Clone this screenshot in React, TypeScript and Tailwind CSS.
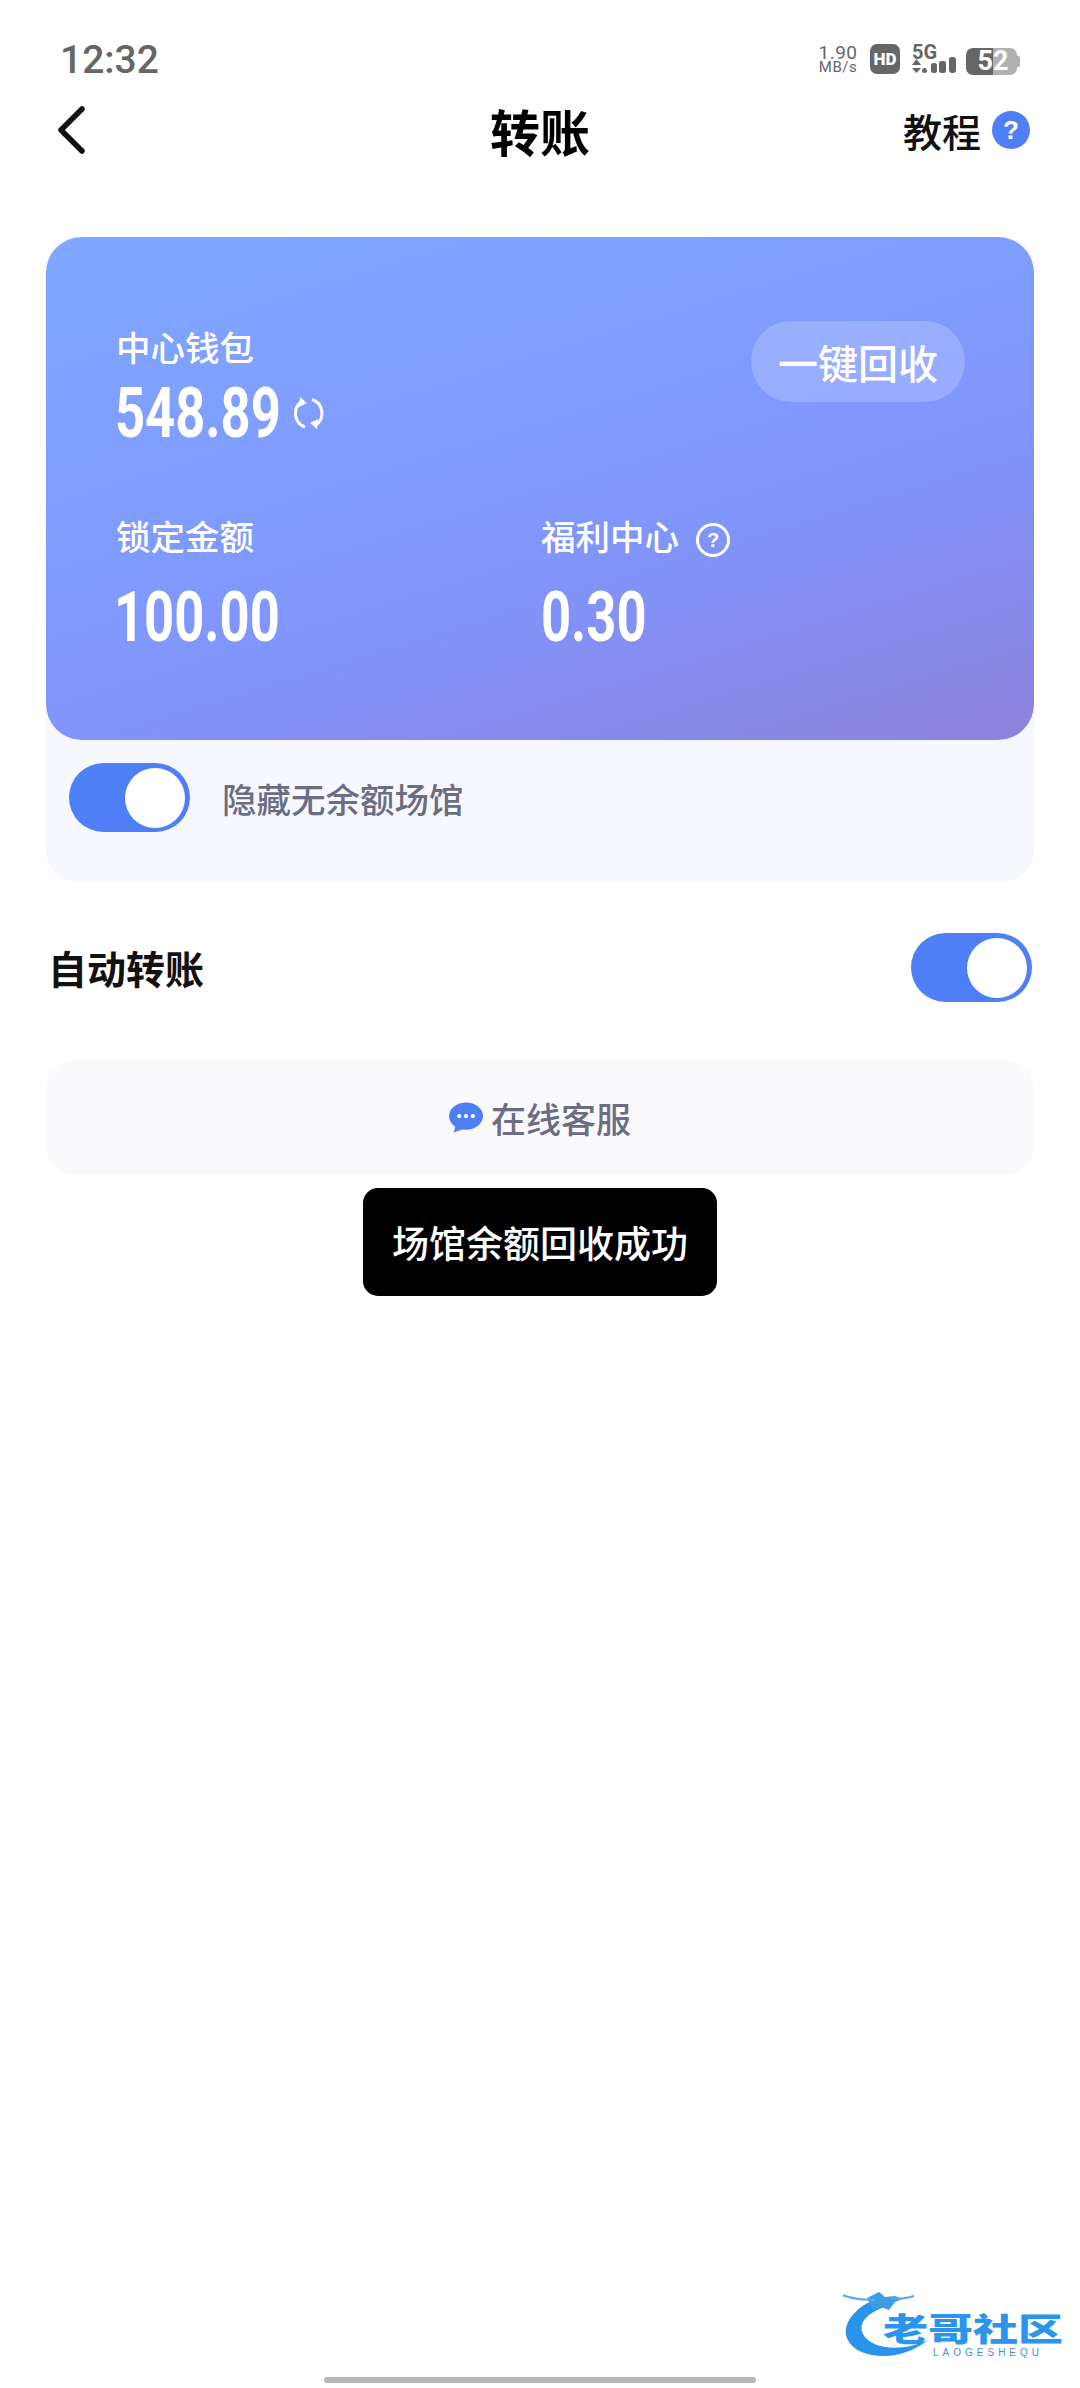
import React from "react";

const cjk = "font-['Noto_Sans_CJK_SC','Noto_Sans',sans-serif]";

// Roboto squeezed to the reference's narrow DIN-like digits; the width is held by the outer box
function Amount({ value, width }: { value: string; width: string }) {
  return (
    <div className={`${width} h-[60px] shrink-0`}>
      <span className="inline-block origin-left scale-x-[0.75] whitespace-nowrap font-['Roboto',sans-serif] text-[70px] font-bold leading-[60px] text-white">
        {value}
      </span>
    </div>
  );
}

function Toggle() {
  return (
    <div className="flex h-[69px] w-[121px] shrink-0 items-center justify-end rounded-full bg-[#4f7ff6] pr-[5px]">
      <div className="h-[60px] w-[60px] rounded-full bg-white" />
    </div>
  );
}

function StatusIcons() {
  return (
    <div className="flex items-start">
      <div className="flex w-[42px] flex-col items-center font-['Roboto',sans-serif] text-[#666]">
        <span className="text-[19px] leading-[17px] tracking-[0.5px]">1.90</span>
        <span className="whitespace-nowrap text-[15px] leading-[13px] tracking-[0.5px]">MB/s</span>
      </div>
      <div className="ml-[11px] flex h-[30px] w-[30px] items-center justify-center rounded-[7px] bg-[#666] font-['Roboto',sans-serif] text-[17px] font-black leading-none text-white">
        HD
      </div>
      <div className="relative ml-[12px] h-[30px] w-[44px]">
        <span className="absolute left-0 top-[2px] font-['Roboto',sans-serif] text-[20px] font-bold leading-[13px] text-[#666]">5G</span>
        <svg className="absolute left-0 top-[8px]" width="44" height="22" viewBox="0 0 44 22" fill="#666">
          <path d="M4.500 7L9 13H0zM0 16h9l-4.500 5z" />
          <rect x="10" y="16" width="5" height="5" rx="2.500" />
          <rect x="19" y="11" width="6" height="10" rx="2.500" />
          <rect x="27" y="9" width="7" height="12" rx="2.500" />
          <rect x="37" y="5" width="7" height="16" rx="3" />
        </svg>
      </div>
      <div className="ml-[10px] mt-[4px] flex h-[27px] items-center">
        <div className="flex h-[27px] w-[27px] items-center justify-end rounded-l-[7px] bg-[#666]">
          <span className="font-['Roboto',sans-serif] text-[27px] font-bold leading-[27px] text-white">5</span>
        </div>
        <div className="h-[27px] w-[24px] rounded-r-[7px] bg-[#b0b0b0] font-['Roboto',sans-serif] text-[27px] font-bold leading-[27px] text-white">
          2
        </div>
        <div className="h-[11px] w-[3px] rounded-r-[2px] bg-[#b0b0b0]" />
      </div>
    </div>
  );
}

function RefreshIcon() {
  return (
    <svg width="33" height="34" viewBox="0 0 33 34" fill="none" stroke="white" strokeWidth="3">
      <path d="M9 6A14.500 14.500 0 0 0 13 31" />
      <path d="M24 29A14.500 14.500 0 0 0 20 3.500" />
      <path d="M8 1l7 6-8 4z" fill="white" stroke="none" />
      <path d="M25 33l-7-6 8-4z" fill="white" stroke="none" />
    </svg>
  );
}

function ChatIcon() {
  return (
    <svg width="34" height="32" viewBox="0 0 35 32" fill="#4e7ff5">
      <ellipse cx="17.500" cy="14" rx="17.500" ry="14" />
      <path d="M7 22L5 31l13-5z" />
      <circle cx="10.500" cy="14" r="2.200" fill="white" />
      <circle cx="17.500" cy="14" r="2.200" fill="white" />
      <circle cx="24.500" cy="14" r="2.200" fill="white" />
    </svg>
  );
}

function Watermark() {
  return (
    <div className="absolute left-[843px] top-[2290px] h-[72px] w-[225px]">
      <svg className="absolute left-0 top-0" width="100" height="72" viewBox="0 0 100 72">
        <path d="M37 8C10 16-4 38 6 52 16 68 55 74 85 50 60 62 28 60 20 44 14 32 26 22 44 16Z" fill="#2a93ec" />
        <path d="M24 8l12-6 6 5 10-1 8 3-8 3-6 8-8-3-8 3z" fill="#3f9be8" />
        <path d="M-1 5C10 9 20 10 32 10M48 8C56 10 62 9 71 6" fill="none" stroke="#5aa9ee" strokeWidth="2" />
      </svg>
      <div className={`absolute left-[40px] top-[26px] origin-top scale-y-[0.72] whitespace-nowrap ${cjk} text-[45px] font-black leading-[31px] text-[#2b94ee]`}>
        老哥社区
      </div>
      <div className="absolute left-[90px] top-[58px] whitespace-nowrap font-['Liberation_Sans',sans-serif] text-[10px] leading-[10px] tracking-[4px] text-[#4a8fd8]">
        LAOGESHEQU
      </div>
    </div>
  );
}

export default function App() {
  return (
    <div className={`relative h-[2388px] w-[1080px] overflow-hidden bg-white ${cjk}`}>
      <div className="flex h-[105px] justify-between pl-[60px] pr-[60px] pt-[44px]">
        <span className="font-['Roboto',sans-serif] text-[39px] font-medium leading-[32px] text-[#666]">12:32</span>
        <StatusIcons />
      </div>

      <div className="relative flex h-[50px] items-center justify-center">
        <svg className="absolute left-[55px] top-[0px]" width="32" height="50" viewBox="0 0 32 50" fill="none" stroke="#111" strokeWidth="5.500" strokeLinecap="round" strokeLinejoin="round">
          <path d="M27 4L6 25l21 21" />
        </svg>
        <h1 className="text-[50px] font-bold leading-[50px] text-black">转账</h1>
        <div className="absolute right-[50px] top-[3px] flex items-center gap-[11px]">
          <span className="text-[39px] font-medium leading-[44px] text-[#111]">教程</span>
          <div className="flex h-[38px] w-[38px] items-center justify-center rounded-full bg-[#4e7ff5] font-['Liberation_Sans',sans-serif] text-[26px] font-bold leading-none text-white">
            ?
          </div>
        </div>
      </div>

      <div className="mx-[46px] mt-[82px] h-[644px] rounded-[30px] bg-[#f7f8fe]">
        <div className="h-[503px] rounded-[36px] bg-[linear-gradient(163deg,#7fa8ff_0%,#8096fd_58%,#8c82dc_100%)] pl-[70px] pr-[69px] pt-[84px]">
          <div className="flex justify-between">
            <div>
              <div className="text-[34.500px] font-medium leading-[50px] text-white">中心钱包</div>
              <div className="-ml-[1px] mt-[12px] flex items-center">
                <Amount value="548.89" width="w-[164px]" />
                <div className="ml-[13px]">
                  <RefreshIcon />
                </div>
              </div>
            </div>
            <button className="flex h-[81px] w-[214px] items-center justify-center rounded-full bg-white/20 text-[40px] font-medium text-white">
              一键回收
            </button>
          </div>
          <div className="mt-[67px] flex">
            <div className="w-[425px]">
              <div className="text-[34.500px] font-medium leading-[50px] text-white">锁定金额</div>
              <div className="-ml-[2px] mt-[27px]">
                <Amount value="100.00" width="w-[164px]" />
              </div>
            </div>
            <div>
              <div className="flex h-[50px] items-center">
                <span className="text-[34.500px] font-medium leading-[50px] text-white">福利中心</span>
                <div className="ml-[17px] mt-[10px] flex h-[34px] w-[34px] items-center justify-center rounded-full border-[3px] border-white font-['Liberation_Sans',sans-serif] text-[20px] font-bold leading-none text-white">
                  ?
                </div>
              </div>
              <div className="mt-[27px]">
                <Amount value="0.30" width="w-[104px]" />
              </div>
            </div>
          </div>
        </div>
        <div className="flex items-center pl-[23px] pt-[23px]">
          <Toggle />
          <span className="ml-[32px] text-[34.500px] font-medium leading-[50px] text-[#6b6d85]">隐藏无余额场馆</span>
        </div>
      </div>

      <div className="mx-[46px] mt-[52px] flex h-[69px] items-center justify-between pl-[3px] pr-[2px]">
        <span className="-ml-[1px] text-[39px] font-bold leading-[69px] text-[#111]">自动转账</span>
        <Toggle />
      </div>

      <div className="mx-[46px] mt-[58px] flex h-[115px] items-center justify-center gap-[8px] rounded-[30px] bg-[#fafafd]">
        <ChatIcon />
        <span className="text-[35px] font-medium leading-[50px] text-[#6b6d85]">在线客服</span>
      </div>

      <div className="absolute left-[363px] top-[1188px] flex h-[108px] w-[354px] items-center justify-center rounded-[15px] bg-black text-[37px] font-medium leading-[50px] text-white">
        场馆余额回收成功
      </div>

      <Watermark />
      <div className="absolute bottom-[5px] left-[324px] h-[6px] w-[432px] rounded-full bg-[#b8b8b8]" />
    </div>
  );
}
